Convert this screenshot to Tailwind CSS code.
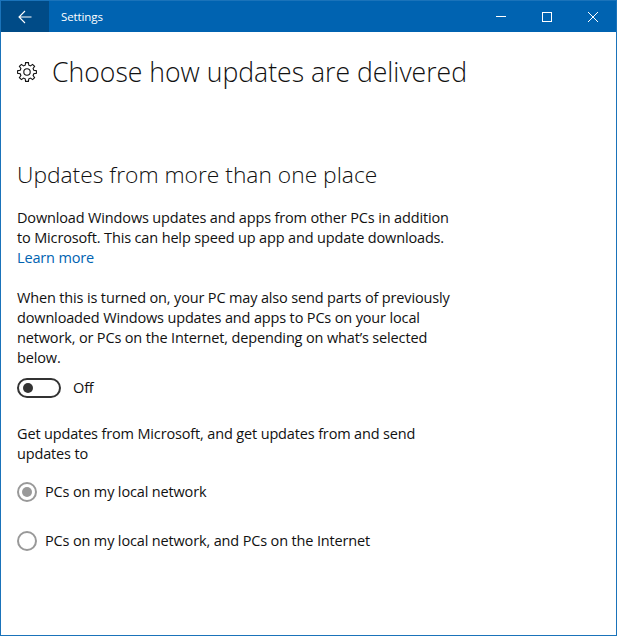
<!DOCTYPE html>
<html lang="en">
<head>
  <meta charset="UTF-8" />
  <title>Settings</title>
  <script src="https://cdn.jsdelivr.net/npm/@tailwindcss/browser@4"></script>
</head>
<body class="bg-white">
  <div class="w-[617px] h-[636px] border border-[#1a73ba] flex flex-col overflow-hidden font-['Open_Sans',sans-serif] text-[#111]">

    <!-- Title bar -->
    <header class="h-[31px] bg-[#0063b1] text-white flex items-center shrink-0">
      <button class="w-[48px] h-full bg-[#004b87] flex items-center justify-center">
        <svg width="14" height="14" viewBox="0 0 14 14" fill="none" stroke="white" stroke-width="1.1"><path d="M1 7H13.500M7 1L1 7L7 13"/></svg>
      </button>
      <span class="ml-[12px] text-[11.5px] tracking-[-0.1px]">Settings</span>
      <div class="ml-auto flex h-full">
        <div class="w-[46px] flex items-center justify-center"><div class="w-[10px] h-px bg-white"></div></div>
        <div class="w-[46px] flex items-center justify-center"><div class="w-[10px] h-[10px] border border-white"></div></div>
        <div class="w-[46px] flex items-center justify-center">
          <svg width="10" height="10" viewBox="0 0 10 10" stroke="white" stroke-width="1"><path d="M0 0L10 10M10 0L0 10"/></svg>
        </div>
      </div>
    </header>

    <main class="flex-1 pl-[16px]">
      <!-- Page heading -->
      <div class="flex items-center mt-[22px] h-[36px]">
        <svg width="20" height="20" viewBox="0 0 20 20" fill="none" stroke="#111" stroke-width="1.100">
          <circle cx="10" cy="10" r="3.200"/>
          <path d="M8.600 .6h2.800l.4 2.600 1.700.7 2.100-1.500 2 2-1.500 2.100.7 1.700 2.600.4v2.800l-2.600.4-.7 1.700 1.500 2.100-2 2-2.100-1.500-1.700.7-.4 2.600H8.600l-.4-2.600-1.700-.7-2.100 1.500-2-2 1.500-2.100-.7-1.700L.6 11.400V8.600l2.600-.4.7-1.700-1.500-2.100 2-2 2.100 1.500 1.700-.7z"/>
        </svg>
        <h1 class="ml-[15px] text-[26.6px] leading-[36px] font-light">Choose how updates are delivered</h1>
      </div>

      <h2 class="mt-[69px] text-[22.8px] leading-[32px] font-light">Updates from more than one place</h2>

      <p class="mt-[17px] text-[14.5px] leading-[20px] tracking-[-0.15px]">Download Windows updates and apps from other PCs in addition<br>to Microsoft. This can help speed up app and update downloads.<br><a href="#" class="text-[#0063b1]">Learn more</a></p>

      <p class="mt-[20px] text-[14.5px] leading-[20px] tracking-[-0.15px]">When this is turned on, your PC may also send parts of previously<br>downloaded Windows updates and apps to PCs on your local<br>network, or PCs on the Internet, depending on what’s selected<br>below.</p>

      <!-- Toggle -->
      <div class="flex items-center mt-[10px] h-[20px]">
        <div class="w-[44px] h-[20px] rounded-full border-2 border-[#333] flex items-center pl-[4px]">
          <div class="w-[10px] h-[10px] rounded-full bg-[#333]"></div>
        </div>
        <span class="ml-[12px] text-[14.5px] leading-[20px] tracking-[-0.15px]">Off</span>
      </div>

      <p class="mt-[26px] text-[14.5px] leading-[20px] tracking-[-0.15px]">Get updates from Microsoft, and get updates from and send<br>updates to</p>

      <!-- Radios -->
      <div class="flex items-center mt-[18px] h-[20px]">
        <div class="w-[20px] h-[20px] rounded-full border-2 border-[#999] flex items-center justify-center">
          <div class="w-[10px] h-[10px] rounded-full bg-[#999]"></div>
        </div>
        <span class="ml-[8px] text-[14.5px] leading-[20px] tracking-[-0.15px]">PCs on my local network</span>
      </div>
      <div class="flex items-center mt-[29px] h-[20px]">
        <div class="w-[20px] h-[20px] rounded-full border-2 border-[#999]"></div>
        <span class="ml-[8px] text-[14.5px] leading-[20px] tracking-[-0.15px]">PCs on my local network, and PCs on the Internet</span>
      </div>
    </main>
  </div>
</body>
</html>
